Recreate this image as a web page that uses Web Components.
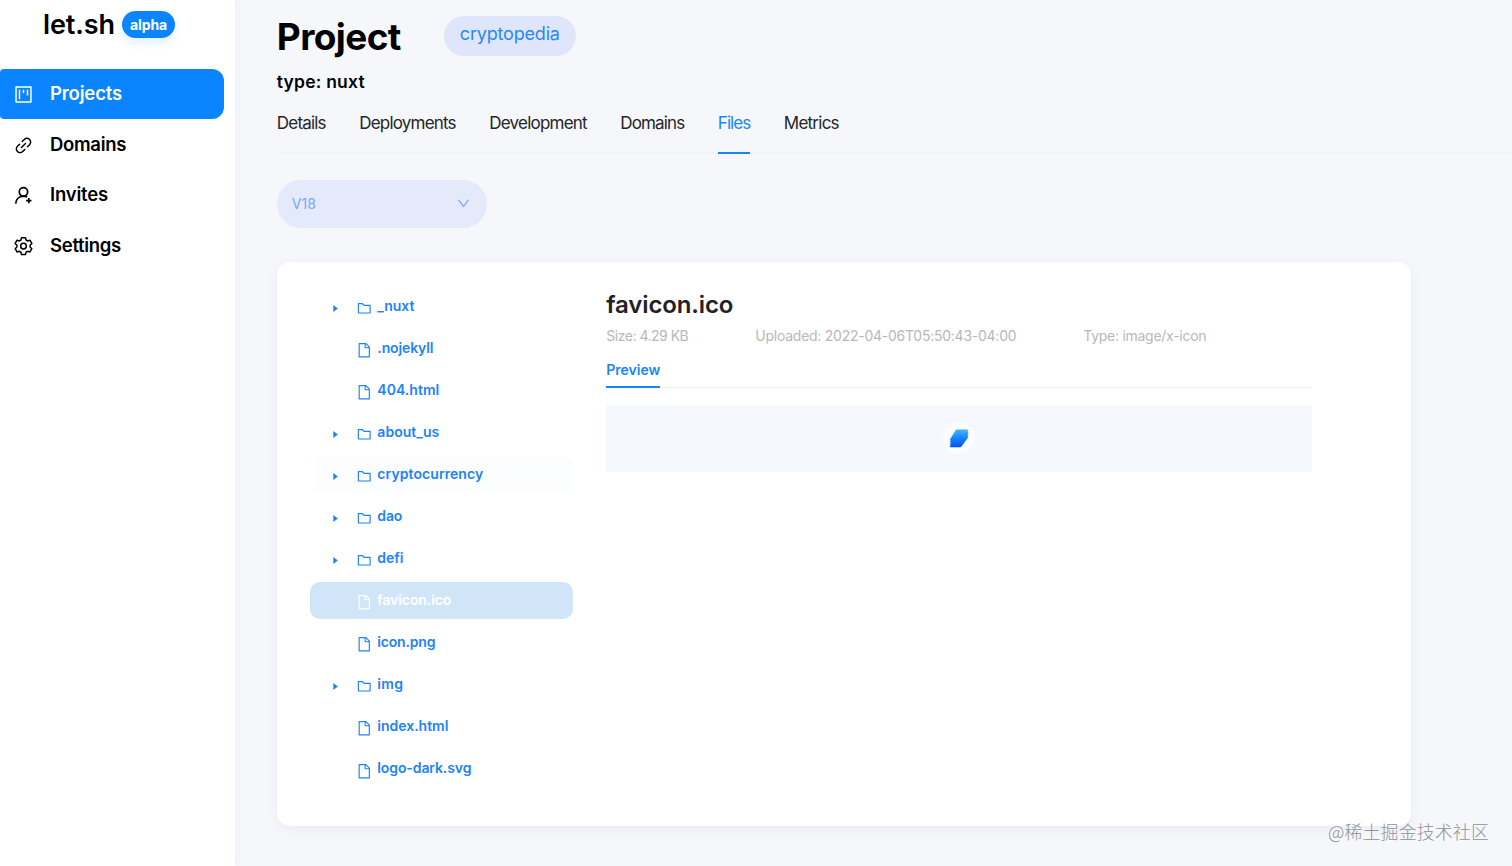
<!DOCTYPE html>
<html lang="en">
<head>
<meta charset="utf-8">
<title>let.sh</title>
<style>
    html, body {
        margin: 0;
        height: 100%;
    }

    body {
        overflow: hidden;
        font-family: Inter, "Noto Sans CJK SC", sans-serif;
        color: #000;
        background: #f5f7fb;
    }
</style>
</head>
<body>
<let-app></let-app>

<script>
// shared base: every block only declares its own markup
class LetElement extends HTMLElement {
    constructor() {
        super();
        const template = document.createElement('template');
        template.innerHTML = this.constructor.markup;
        this.attachShadow({ mode: 'open' });
        this.shadowRoot.appendChild(template.content.cloneNode(true));
    }
}

const icons = {
    project: '<path fill-rule="evenodd" d="M880 112H144c-17.700 0-32 14.300-32 32v736c0 17.700 14.300 32 32 32h736c17.700 0 32-14.300 32-32V144c0-17.700-14.300-32-32-32zm-40 728H184V184h656v656z"/><path d="M280 276h72v470h-72zM476 276h72v178h-72zM672 276h72v280h-72z"/>',
    link: '<path d="M574 665.400a8.030 8.030 0 0 0-11.300 0L446.500 781.600c-53.800 53.800-144.600 59.500-204 0-59.500-59.500-53.800-150.200 0-204l116.200-116.200c3.100-3.100 3.100-8.200 0-11.300l-39.800-39.800a8.030 8.030 0 0 0-11.300 0L191.400 526.500c-84.600 84.600-84.600 221.500 0 306s221.500 84.600 306 0l116.200-116.200c3.100-3.100 3.100-8.200 0-11.300L574 665.400zm258.600-474c-84.600-84.600-221.500-84.600-306 0L410.300 307.600a8.030 8.030 0 0 0 0 11.300l39.700 39.700c3.100 3.100 8.200 3.100 11.300 0l116.200-116.200c53.800-53.800 144.600-59.500 204 0 59.500 59.500 53.800 150.200 0 204L665.300 562.600a8.030 8.030 0 0 0 0 11.300l39.800 39.800c3.100 3.100 8.200 3.100 11.300 0l116.200-116.200c84.500-84.600 84.500-221.500 0-306.100zM610.100 372.300a8.030 8.030 0 0 0-11.300 0L372.300 598.700a8.030 8.030 0 0 0 0 11.300l39.600 39.600c3.100 3.100 8.200 3.100 11.300 0l226.400-226.400c3.100-3.100 3.100-8.200 0-11.300l-39.500-39.600z"/>',
    user: '<g fill="none" stroke="currentColor" stroke-width="84"><circle cx="510" cy="333" r="205"/><path d="M130 910c12-205 160-360 375-370 75 0 135 18 190 50M770 630v260M640 760h260"/></g>',
    gear: '<g fill="none" stroke="currentColor" stroke-width="72" stroke-linejoin="round"><path d="M415 80h194l28 115 78 45 112-33 92 158-86 83v90l86 83-92 158-112-33-78 45-28 115H415l-28-115-78-45-112 33-92-158 86-83v-90l-86-83 92-158 112 33 78-45z"/><circle cx="512" cy="493" r="140"/></g>',
    down: '<path d="M884 256h-75c-5.100 0-9.900 2.500-12.900 6.600L512 654.200 227.900 262.600c-3-4.100-7.800-6.600-12.900-6.600h-75c-6.500 0-10.300 7.400-6.500 12.700l352.600 486.100c12.800 17.600 39 17.600 51.700 0l352.600-486.100c3.900-5.300.1-12.700-6.400-12.700z"/>',
    folder: '<path fill-rule="evenodd" d="M880 298.400H521L403.700 186.200a8.150 8.150 0 0 0-5.500-2.200H144c-17.700 0-32 14.300-32 32v592c0 17.700 14.300 32 32 32h736c17.700 0 32-14.300 32-32V330.400c0-17.700-14.300-32-32-32zM840 768H184V256h188.500l119.600 114.400H840V768z"/>',
    file: '<path fill-rule="evenodd" d="M854.600 288.600L639.400 73.400c-6-6-14.100-9.400-22.600-9.400H192c-17.700 0-32 14.300-32 32v832c0 17.700 14.300 32 32 32h640c17.700 0 32-14.300 32-32V311.300c0-8.500-3.400-16.700-9.400-22.700zM790.200 326H602V137.800L790.200 326zm1.800 562H232V136h302v216a42 42 0 0 0 42 42h216v494z"/>',
    caret: '<path d="M260 100L780 512 260 924z"/>',
};

class LetIcon extends LetElement {
    static markup = `
        <style>
            :host { display: inline-flex; width: 1em; height: 1em; flex: none; }
            svg { width: 100%; height: 100%; fill: currentColor; }
        </style>
        <svg viewBox="0 0 1024 1024"></svg>
    `;

    static get observedAttributes() {
        return ['name'];
    }

    attributeChangedCallback(name, oldValue, newValue) {
        this.shadowRoot.querySelector('svg').innerHTML = icons[newValue] || '';
    }
}

// a label with a known width, the tracking is spread over its letters
class LetLabel extends LetElement {
    static markup = `
        <style>
            :host { display: inline-block; white-space: nowrap; flex: none; }
            span { display: inline-block; }
        </style>
        <span><slot></slot></span>
    `;

    connectedCallback() {
        const width = Number(this.getAttribute('width'));
        if (!width) return;
        const span = this.shadowRoot.querySelector('span');
        const natural = span.getBoundingClientRect().width;
        span.style.letterSpacing = `${(width - natural) / this.textContent.length}px`;
        this.style.width = `${width}px`;
    }
}

class NavItem extends LetElement {
    static markup = `
        <style>
            :host {
                display: flex;
                align-items: center;
                gap: 16px;
                box-sizing: border-box;
                width: 224px;
                height: 50.7px;
                padding-left: 13px;
                font-size: 18.5px;
                font-weight: 600;
                line-height: 24px;
            }
            :host([active]) {
                color: #fff;
                background: #0b84ff;
                border-radius: 4px 12px 12px 4px;
            }
            let-icon { font-size: 21px; margin-top: 1px; }
            .text { padding-bottom: 2px; }
        </style>
        <let-icon></let-icon>
        <div class="text"><slot></slot></div>
    `;

    connectedCallback() {
        this.shadowRoot.querySelector('let-icon').setAttribute('name', this.getAttribute('icon'));
    }
}

class SideBar extends LetElement {
    static markup = `
        <style>
            :host {
                display: block;
                width: 235px;
                background: #fff;
                box-shadow: 0 0 8px rgba(60, 80, 120, .05);
            }
            .logo {
                display: flex;
                gap: 7px;
                height: 68.5px;
                padding-left: 43px;
            }
            .name {
                font-size: 27px;
                font-weight: 600;
                line-height: 32px;
                padding-top: 9px;
            }
            .badge {
                width: 53px;
                height: 27px;
                margin-top: 11px;
                border-radius: 14px;
                background: #0b84ff;
                box-shadow: 0 5px 10px rgba(11, 132, 255, .12);
                color: #fff;
                font-size: 14px;
                font-weight: 700;
                line-height: 27px;
                text-align: center;
            }
        </style>
        <div class="logo">
            <let-label class="name" width="72">let.sh</let-label>
            <div class="badge"><let-label width="37">alpha</let-label></div>
        </div>
        <nav-item icon="project" active><let-label width="72">Projects</let-label></nav-item>
        <nav-item icon="link"><let-label width="76">Domains</let-label></nav-item>
        <nav-item icon="user"><let-label width="58">Invites</let-label></nav-item>
        <nav-item icon="gear"><let-label width="71">Settings</let-label></nav-item>
    `;
}

class ProjectHeader extends LetElement {
    static markup = `
        <style>
            :host { display: block; }
            .top { display: flex; height: 68px; }
            h1 {
                width: 167px;
                margin: 0;
                padding-top: 14px;
                font-size: 37px;
                font-weight: 700;
                line-height: 45px;
            }
            .tag {
                width: 132px;
                height: 40px;
                margin-top: 16px;
                border-radius: 20px;
                background: #dfe6fb;
                color: #2a86fa;
                font-size: 18px;
                line-height: 35px;
                text-align: center;
            }
            .type {
                height: 26px;
                font-size: 17.5px;
                font-weight: 600;
                line-height: 28px;
            }
        </style>
        <div class="top">
            <h1><let-label width="124">Project</let-label></h1>
            <div class="tag"><let-label width="100">cryptopedia</let-label></div>
        </div>
        <div class="type"><let-label width="88">type: nuxt</let-label></div>
    `;
}

class TabBar extends LetElement {
    static markup = `
        <style>
            :host {
                display: flex;
                gap: 33.5px;
                height: 59px;
                border-bottom: 1px solid #f0f1f4;
                font-size: 17px;
                line-height: 59px;
                color: #252525;
            }
            ::slotted(let-label) { height: 58px; }
            ::slotted([active]) {
                color: #1787fb;
                border-bottom: 2px solid #1787fb;
            }
        </style>
        <slot></slot>
    `;
}

class VersionSelect extends LetElement {
    static markup = `
        <style>
            :host {
                display: flex;
                justify-content: space-between;
                align-items: center;
                box-sizing: border-box;
                width: 210px;
                height: 48px;
                margin: 26px 0 34px;
                padding: 0 16px 2px 15px;
                border-radius: 24px;
                background: #e4eafa;
                color: #75a9f7;
                font-size: 14px;
            }
            let-icon { font-size: 15px; }
        </style>
        <slot></slot>
        <let-icon name="down"></let-icon>
    `;
}

class TreeNode extends LetElement {
    static markup = `
        <style>
            :host {
                display: grid;
                grid-template-columns: 36.5px 19.5px 1fr;
                align-items: center;
                box-sizing: border-box;
                width: 263px;
                height: 37.5px;
                margin-bottom: 4.56px;
                padding-left: 11px;
                border-radius: 10px;
                color: #1c83f8;
                font-size: 14px;
                font-weight: 600;
            }
            :host([hovered]) { background: linear-gradient(90deg, #fff 1.5%, #fbfdff 3%); }
            :host([selected]) { background: #d1e5f9; color: #fff; }
            .caret { font-size: 9px; margin: 4px 0 0 10px; }
            .kind { font-size: 16.5px; margin: 4px 0 0 -1.5px; }
            .text { padding-bottom: 1px; line-height: 20px; }
        </style>
        <let-icon class="caret"></let-icon>
        <let-icon class="kind"></let-icon>
        <div class="text"><slot></slot></div>
    `;

    connectedCallback() {
        const isFolder = this.hasAttribute('folder');
        this.shadowRoot.querySelector('.kind').setAttribute('name', isFolder ? 'folder' : 'file');
        if (isFolder) {
            this.shadowRoot.querySelector('.caret').setAttribute('name', 'caret');
        }
    }
}

class FilePreview extends LetElement {
    static markup = `
        <style>
            :host { display: block; width: 706px; }
            h2 {
                margin: 0;
                color: #222;
                font-size: 24px;
                font-weight: 600;
                line-height: 32px;
            }
            .meta {
                display: flex;
                gap: 67px;
                padding-top: 4.5px;
                color: #b8b8b8;
                font-size: 14px;
                line-height: 20px;
            }
            .tabs {
                height: 41px;
                border-bottom: 1px solid #eef0f2;
            }
            .tab {
                height: 40px;
                border-bottom: 2px solid #1485fb;
                color: #1485fb;
                font-size: 14px;
                font-weight: 600;
                line-height: 47px;
            }
            .view {
                display: grid;
                place-items: center;
                height: 67.5px;
                margin-top: 17px;
                background: #f5f9fe;
            }
            .halo {
                display: grid;
                place-items: center;
                width: 32px;
                height: 32px;
                border-radius: 50%;
                background: #fbfdff;
            }
            svg { display: block; }
        </style>
        <h2><let-label width="127">favicon.ico</let-label></h2>
        <div class="meta">
            <let-label width="82">Size: 4.29 KB</let-label>
            <let-label width="261">Uploaded: 2022-04-06T05:50:43-04:00</let-label>
            <let-label width="123">Type: image/x-icon</let-label>
        </div>
        <div class="tabs"><let-label class="tab" width="54">Preview</let-label></div>
        <div class="view">
            <div class="halo">
                <svg width="20" height="19" viewBox="0 0 20 19">
                    <defs>
                        <linearGradient id="g" x1="0" y1="0" x2="0" y2="1">
                            <stop offset="0" stop-color="#48b4ff"/>
                            <stop offset=".5" stop-color="#1485ff"/>
                            <stop offset="1" stop-color="#064dfa"/>
                        </linearGradient>
                    </defs>
                    <path fill="url(#g)" d="M8 .5H19.500L18.500 3H19.500L18.500 5.500H19.500L18.500 8H19.500L12.500 17.500Q12 18.300 11 18.300H.5L2 15.800H.7L2 13.300H.7L2 10.800H.7L6.500 1.500Q7 .5 8 .5Z"/>
                </svg>
            </div>
        </div>
    `;
}

class FileCard extends LetElement {
    static markup = `
        <style>
            :host {
                display: flex;
                gap: 33px;
                box-sizing: border-box;
                width: 1134.5px;
                height: 563.5px;
                padding: 25px 0 0 33.5px;
                border-radius: 13px;
                background: #fff;
                box-shadow: 0 3px 12px rgba(50, 80, 130, .07);
            }
            .tree { width: 263px; padding-top: .5px; }
            file-preview { padding-top: 2px; }
        </style>
        <div class="tree"><slot></slot></div>
        <file-preview></file-preview>
    `;
}

class LetApp extends LetElement {
    static markup = `
        <style>
            :host { display: flex; height: 100vh; }
            side-bar { flex: none; }
            main { flex: 1; padding-left: 41.8px; }
            .mark {
                position: absolute;
                right: 23px;
                bottom: 22px;
                color: #8f9196;
                font-family: "Noto Sans CJK SC", sans-serif;
                font-size: 18px;
                font-weight: 300;
                line-height: 26px;
                text-shadow: 0 0 2px #fff;
            }
        </style>
        <side-bar></side-bar>
        <main>
            <project-header></project-header>
            <tab-bar>
                <let-label width="49">Details</let-label>
                <let-label width="96.5">Deployments</let-label>
                <let-label width="97.5">Development</let-label>
                <let-label width="64">Domains</let-label>
                <let-label width="32.5" active>Files</let-label>
                <let-label width="55">Metrics</let-label>
            </tab-bar>
            <version-select><let-label width="24">V18</let-label></version-select>
            <file-card>
                <tree-node folder><let-label width="37">_nuxt</let-label></tree-node>
                <tree-node><let-label width="56">.nojekyll</let-label></tree-node>
                <tree-node><let-label width="62">404.html</let-label></tree-node>
                <tree-node folder><let-label width="62">about_us</let-label></tree-node>
                <tree-node folder hovered><let-label width="106">cryptocurrency</let-label></tree-node>
                <tree-node folder><let-label width="25">dao</let-label></tree-node>
                <tree-node folder><let-label width="26">defi</let-label></tree-node>
                <tree-node selected><let-label width="74">favicon.ico</let-label></tree-node>
                <tree-node><let-label width="58">icon.png</let-label></tree-node>
                <tree-node folder><let-label width="26">img</let-label></tree-node>
                <tree-node><let-label width="71">index.html</let-label></tree-node>
                <tree-node><let-label width="94">logo-dark.svg</let-label></tree-node>
            </file-card>
        </main>
        <let-label class="mark" width="161">@稀土掘金技术社区</let-label>
    `;
}

customElements.define('let-icon', LetIcon);
customElements.define('let-label', LetLabel);
customElements.define('nav-item', NavItem);
customElements.define('side-bar', SideBar);
customElements.define('project-header', ProjectHeader);
customElements.define('tab-bar', TabBar);
customElements.define('version-select', VersionSelect);
customElements.define('tree-node', TreeNode);
customElements.define('file-preview', FilePreview);
customElements.define('file-card', FileCard);
customElements.define('let-app', LetApp);
</script>
</body>
</html>
